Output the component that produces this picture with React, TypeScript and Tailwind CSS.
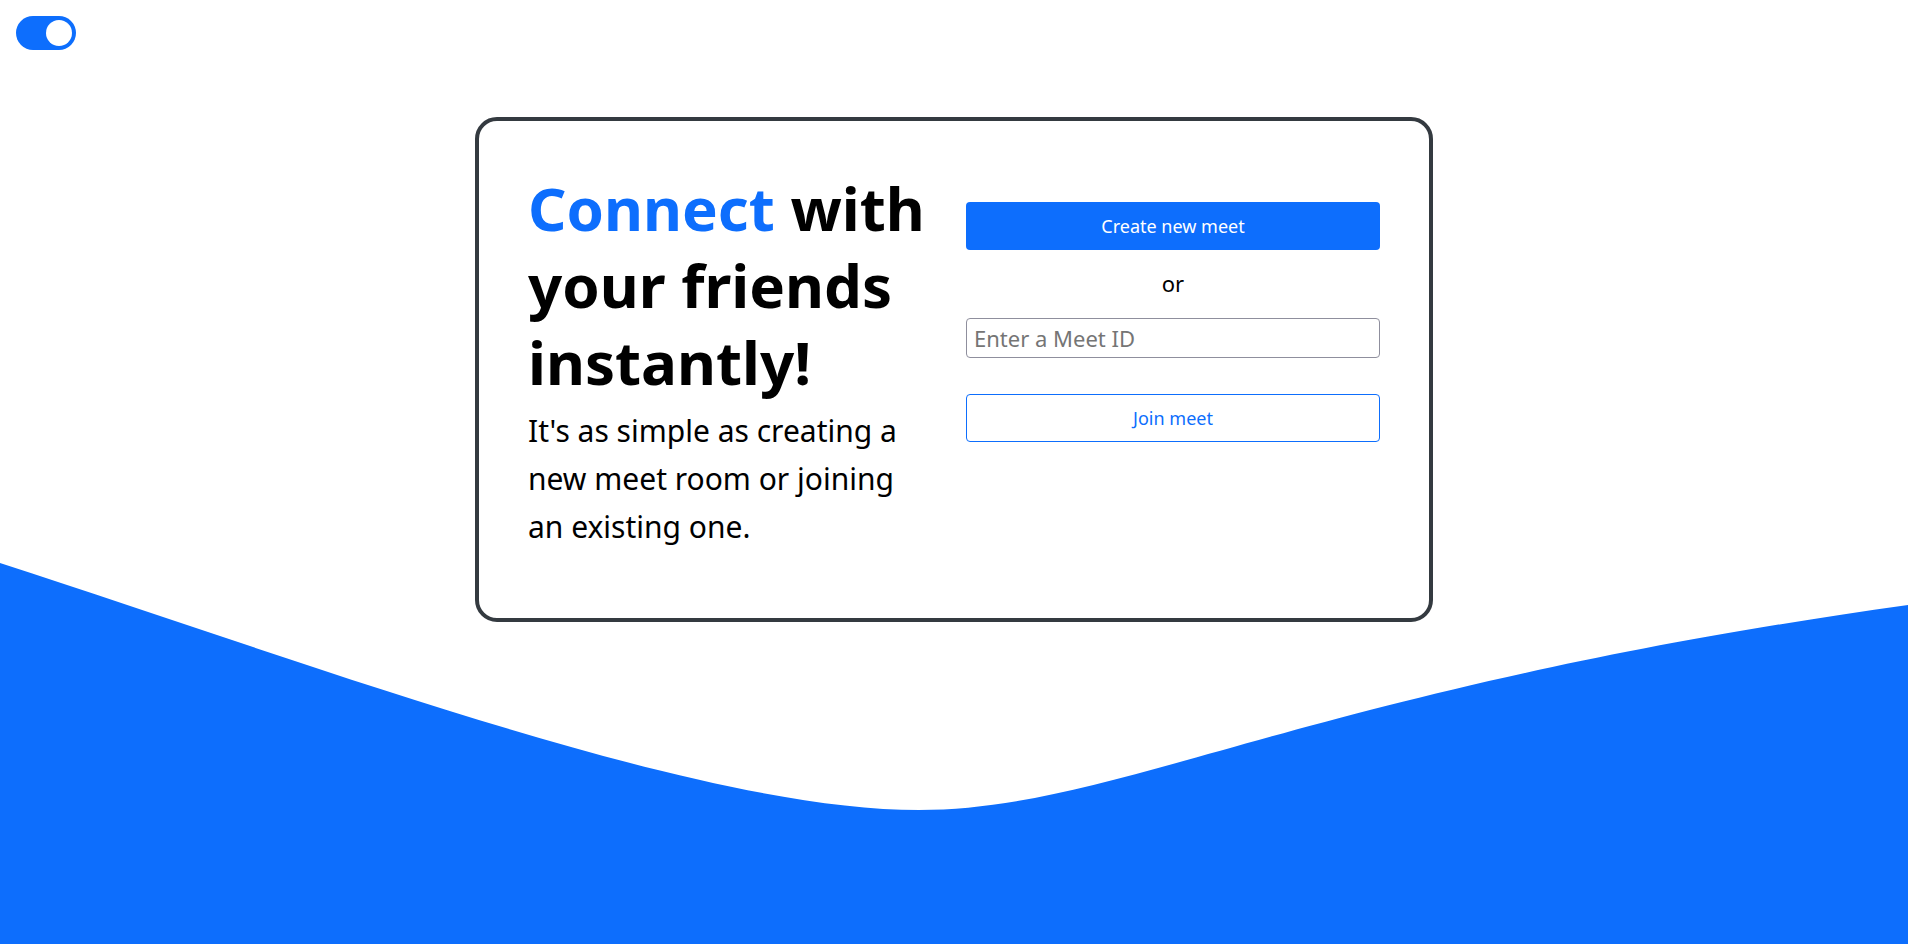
import React, { useState } from 'react';

export default function App() {
  const [dark, setDark] = useState(false);
  const [meetId, setMeetId] = useState('');

  return (
    <div
      className="relative min-h-screen overflow-hidden bg-white text-black"
      style={{ fontFamily: '"Noto Sans", "Open Sans", sans-serif' }}
    >
      {/* wave background */}
      <svg
        className="absolute left-0 top-0 h-[944px] w-[1908px]"
        viewBox="0 0 1908 944"
        preserveAspectRatio="none"
        aria-hidden="true"
      >
        <path
          d="M0 563 C 330 670, 700 810, 919 810 C 1120 810, 1300 690, 1908 605 L1908 944 L0 944 Z"
          fill="#0d6efd"
        />
      </svg>

      <div className="relative z-10 p-4">
        <button
          onClick={() => setDark(!dark)}
          className="flex h-[34px] w-[60px] items-center justify-end rounded-full bg-[#0d6efd] px-1"
          aria-label="toggle theme"
        >
          <span className="block h-[26px] w-[26px] rounded-full bg-white" />
        </button>
      </div>

      <main className="relative z-10 mx-auto mt-[51px] flex w-[958px] rounded-[22px] border-4 border-[#343a40] bg-white pb-[67px] pl-[49px] pr-[49px] pt-[49px]">
        <div className="w-[412px]">
          <h1 className="text-[60px] font-bold leading-[77px]">
            <span className="text-[#0d6efd]">Connect</span> with your friends instantly!
          </h1>
          <p className="mt-[6px] text-[30px] leading-[48px]">
            It's as simple as creating a<br />
            new meet room or joining<br />
            an existing one.
          </p>
        </div>

        <div className="ml-[26px] mt-[32px] flex w-[414px] flex-col">
          <button className="h-12 rounded bg-[#0d6efd] text-lg text-white">
            Create new meet
          </button>
          <p className="mt-[18px] text-center text-[22px] leading-[30px]">or</p>
          <input
            type="text"
            value={meetId}
            onChange={(e) => setMeetId(e.target.value)}
            placeholder="Enter a Meet ID"
            className="mt-5 h-10 rounded-sm border border-[#8f8f9d] px-[7px] text-[22px] placeholder-[#757575] outline-none"
          />
          <button className="mt-9 h-12 rounded border border-[#0d6efd] bg-white text-lg text-[#0d6efd]">
            Join meet
          </button>
        </div>
      </main>
    </div>
  );
}
